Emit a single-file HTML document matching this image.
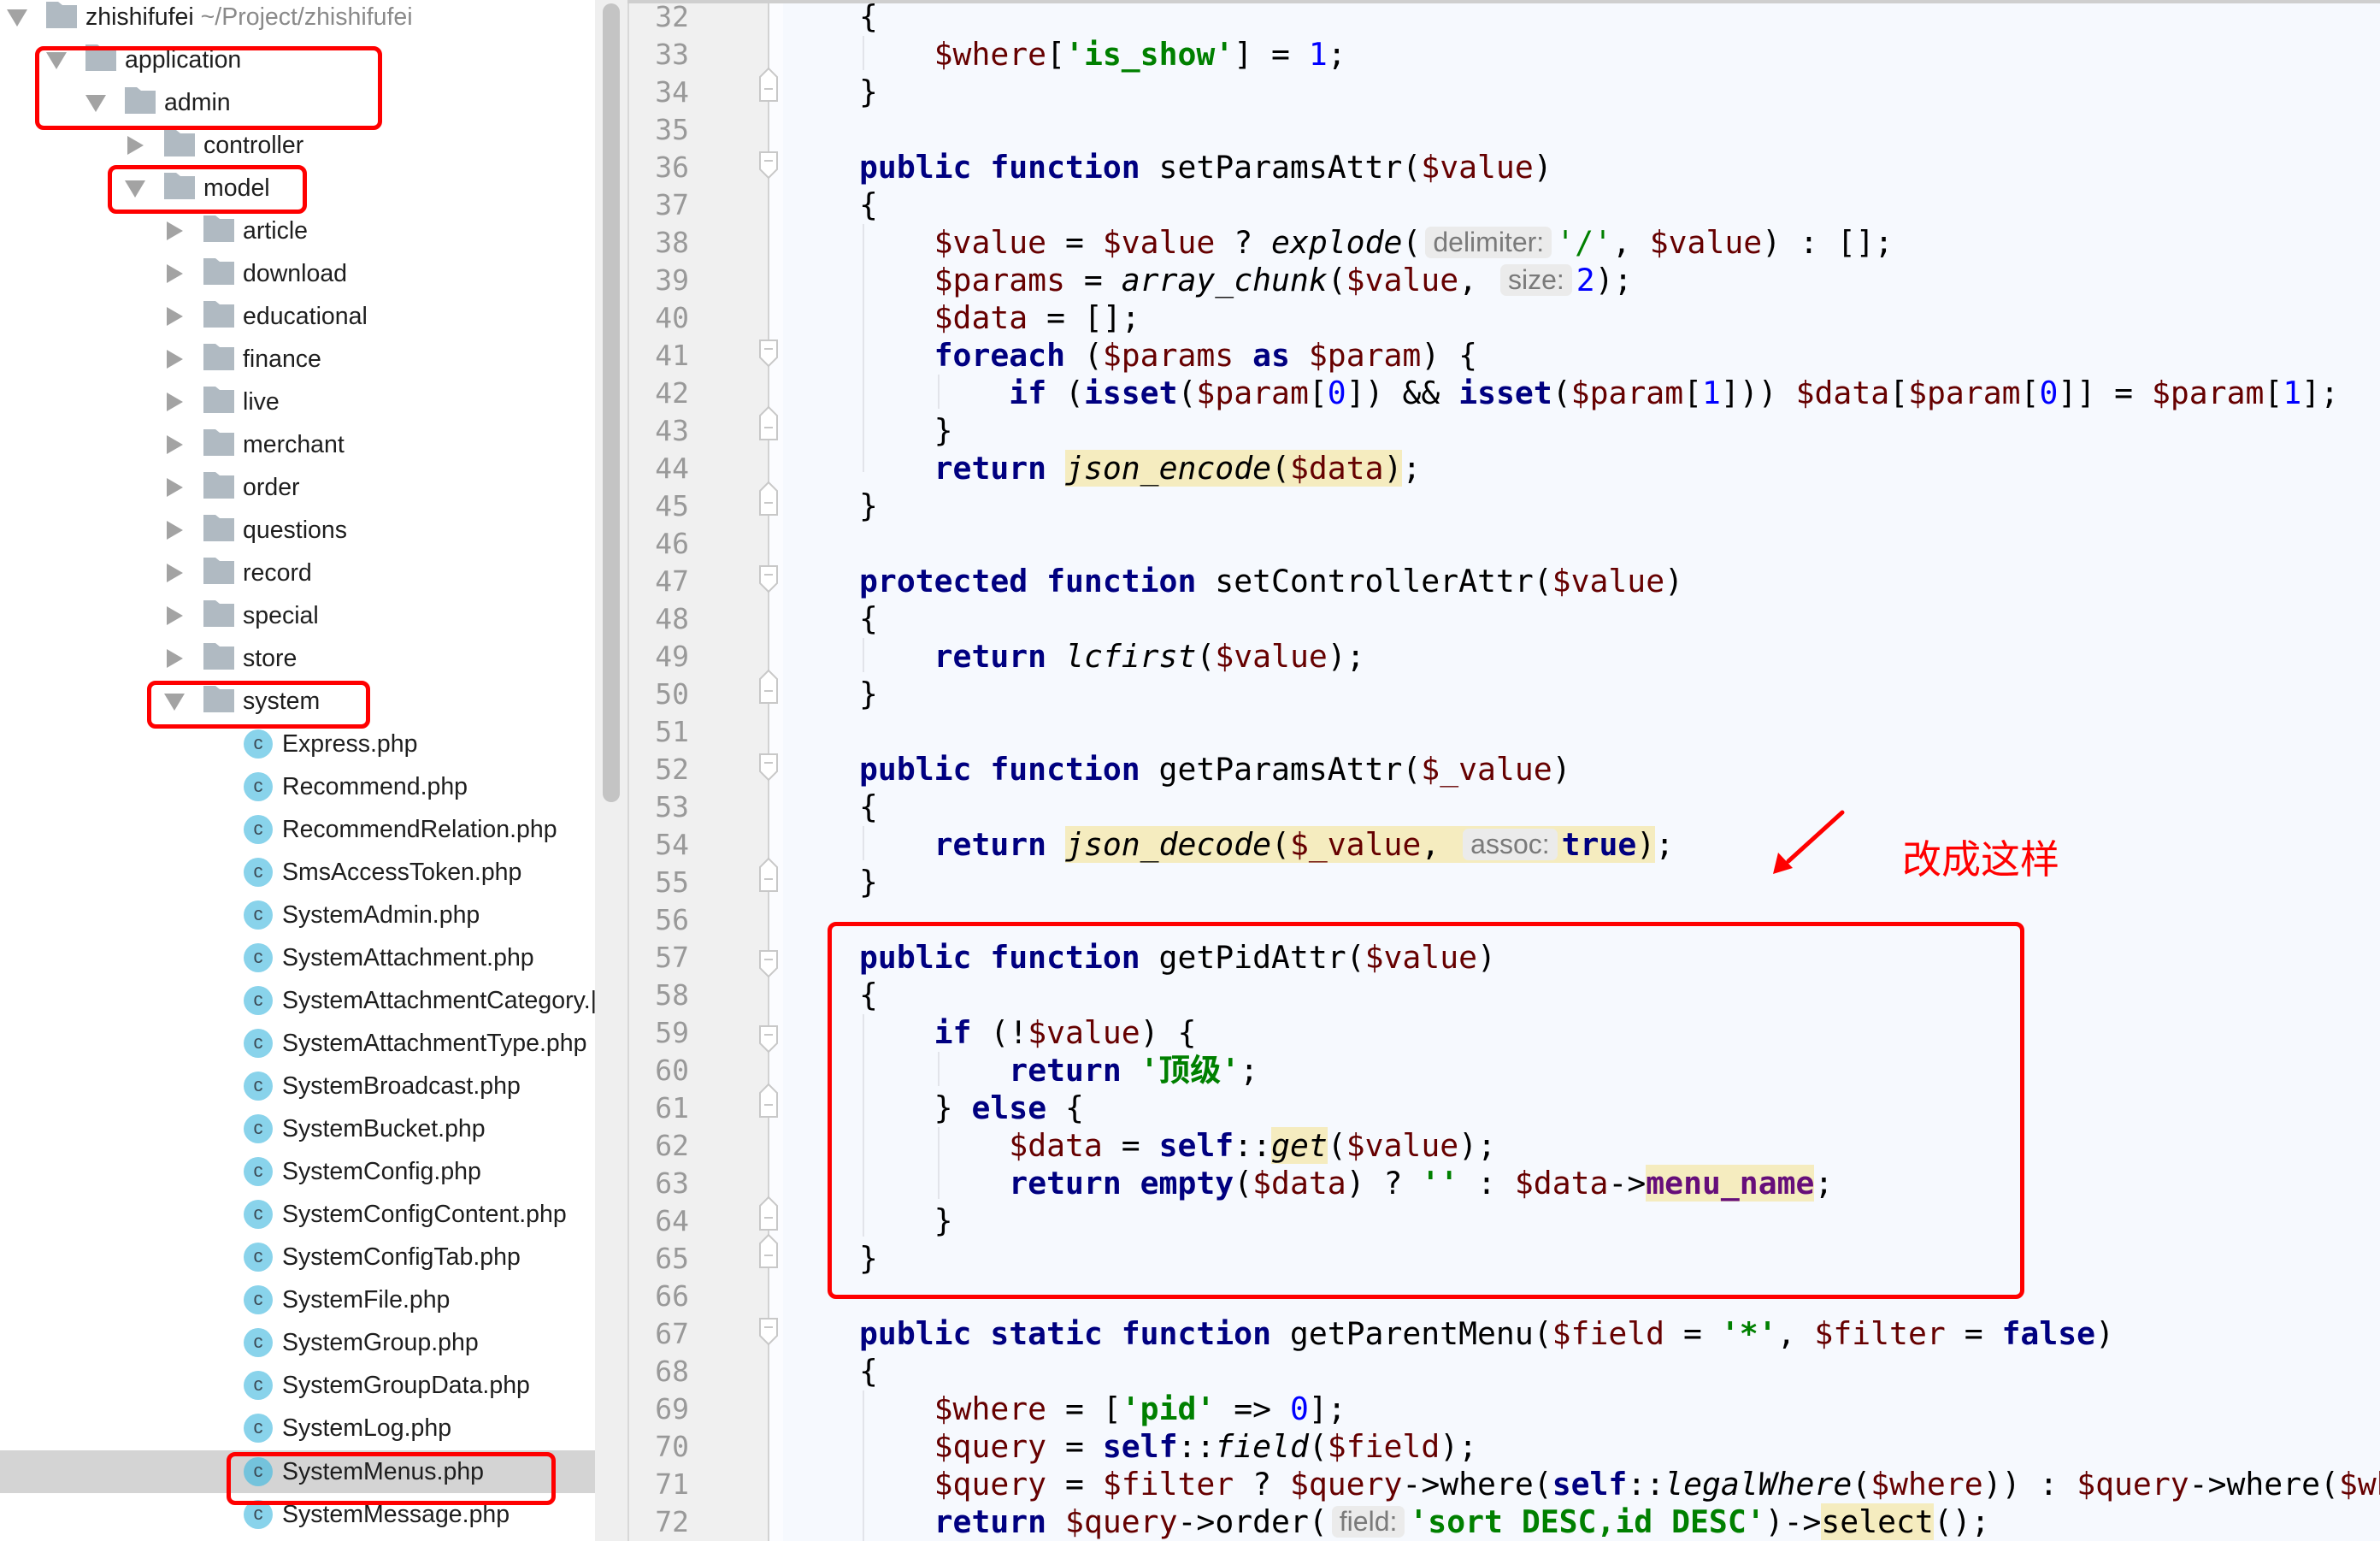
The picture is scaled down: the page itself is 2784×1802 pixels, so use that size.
<!DOCTYPE html>
<html><head><meta charset="utf-8"><style>
*{margin:0;padding:0;box-sizing:border-box}
body{width:2784px;height:1802px;overflow:hidden;background:#fff;position:relative;font-family:"Liberation Sans","Noto Sans CJK SC",sans-serif}
.row{position:absolute;left:0;width:696px;height:50px;font-size:28.5px;color:#1e1e1e;line-height:50px;white-space:nowrap}
.row .t{position:absolute;top:0}
.tri-d{position:absolute;top:16px;width:0;height:0;border-left:12px solid transparent;border-right:12px solid transparent;border-top:20px solid #a3a3a3}
.tri-r{position:absolute;top:14px;width:0;height:0;border-top:11px solid transparent;border-bottom:11px solid transparent;border-left:19px solid #a3a3a3}
.fold{position:absolute;top:11px;width:36px;height:27px;background:#b0bac2}
.fold:before{content:"";position:absolute;left:0;top:-4px;width:14px;height:5px;background:#b0bac2}
.fold:after{content:"";position:absolute;left:14px;top:-4px;width:0;height:0;border-bottom:4px solid #b0bac2;border-right:5px solid transparent}
.cls{position:absolute;top:8px;width:34px;height:34px;border-radius:50%;background:#89d3eb;color:#3b4a55;font-size:22px;line-height:32px;text-align:center;font-family:"Liberation Sans",sans-serif}
.red{position:absolute;border:5px solid #ff0000;border-radius:10px}
#track{position:absolute;left:696px;top:0;width:38px;height:1802px;background:#efefef}
#thumb{position:absolute;left:705px;top:4px;width:20px;height:934px;background:#c4c4c4;border-radius:10px}
#gut{position:absolute;left:734px;top:0;width:165px;height:1802px;background:#f0f0f0;border-left:2px solid #d8d8d8}
#gutline{position:absolute;left:898px;top:0;width:2px;height:1802px;background:#d2d2d2}
#strip{position:absolute;left:900px;top:0;width:16px;height:1802px;background:#fbfcff}
#code{position:absolute;left:916px;top:0;width:1868px;height:1802px;background:#f6f9fe}
#topline{position:absolute;left:734px;top:0;width:2050px;height:4px;background:#cfcfcf}
.ln{position:absolute;left:740px;width:66px;text-align:right;font-family:"DejaVu Sans Mono","Liberation Mono",monospace;font-size:33px;color:#999;height:44px;line-height:44px}
.cl{position:absolute;left:1005px;height:44px;line-height:44px;font-family:"DejaVu Sans Mono","Liberation Mono","Noto Sans CJK SC",monospace;font-size:36.4px;color:#000;white-space:pre}
.k{color:#000080;font-weight:bold}
.v{color:#660000}
.s{color:#008000;font-weight:bold}
.n{color:#0000ff}
.i{font-style:italic}
.f{color:#660e7a;font-weight:bold}
.h{background:#f5ecbf}
.p{display:inline-block;font-family:"Liberation Sans",sans-serif;font-size:32px;color:#7a7a7a;background:#ebebeb;border-radius:7px;padding:0 9px;line-height:37px;vertical-align:2px;font-style:normal;font-weight:normal;margin:0 5px}
</style></head><body>

<div class="row" style="top:-5px"><div class="tri-d" style="left:8px"></div><div class="fold" style="left:54px"></div><span class="t" style="left:100px">zhishifufei <span style="color:#8a8a8a">~/Project/zhishifufei</span></span></div>
<div class="row" style="top:45px"><div class="tri-d" style="left:54px"></div><div class="fold" style="left:100px"></div><span class="t" style="left:146px">application</span></div>
<div class="row" style="top:95px"><div class="tri-d" style="left:100px"></div><div class="fold" style="left:146px"></div><span class="t" style="left:192px">admin</span></div>
<div class="row" style="top:145px"><div class="tri-r" style="left:149px"></div><div class="fold" style="left:192px"></div><span class="t" style="left:238px">controller</span></div>
<div class="row" style="top:195px"><div class="tri-d" style="left:146px"></div><div class="fold" style="left:192px"></div><span class="t" style="left:238px">model</span></div>
<div class="row" style="top:245px"><div class="tri-r" style="left:195px"></div><div class="fold" style="left:238px"></div><span class="t" style="left:284px">article</span></div>
<div class="row" style="top:295px"><div class="tri-r" style="left:195px"></div><div class="fold" style="left:238px"></div><span class="t" style="left:284px">download</span></div>
<div class="row" style="top:345px"><div class="tri-r" style="left:195px"></div><div class="fold" style="left:238px"></div><span class="t" style="left:284px">educational</span></div>
<div class="row" style="top:395px"><div class="tri-r" style="left:195px"></div><div class="fold" style="left:238px"></div><span class="t" style="left:284px">finance</span></div>
<div class="row" style="top:445px"><div class="tri-r" style="left:195px"></div><div class="fold" style="left:238px"></div><span class="t" style="left:284px">live</span></div>
<div class="row" style="top:495px"><div class="tri-r" style="left:195px"></div><div class="fold" style="left:238px"></div><span class="t" style="left:284px">merchant</span></div>
<div class="row" style="top:545px"><div class="tri-r" style="left:195px"></div><div class="fold" style="left:238px"></div><span class="t" style="left:284px">order</span></div>
<div class="row" style="top:595px"><div class="tri-r" style="left:195px"></div><div class="fold" style="left:238px"></div><span class="t" style="left:284px">questions</span></div>
<div class="row" style="top:645px"><div class="tri-r" style="left:195px"></div><div class="fold" style="left:238px"></div><span class="t" style="left:284px">record</span></div>
<div class="row" style="top:695px"><div class="tri-r" style="left:195px"></div><div class="fold" style="left:238px"></div><span class="t" style="left:284px">special</span></div>
<div class="row" style="top:745px"><div class="tri-r" style="left:195px"></div><div class="fold" style="left:238px"></div><span class="t" style="left:284px">store</span></div>
<div class="row" style="top:795px"><div class="tri-d" style="left:192px"></div><div class="fold" style="left:238px"></div><span class="t" style="left:284px">system</span></div>
<div class="row" style="top:845px"><div class="cls" style="left:285px">c</div><span class="t" style="left:330px">Express.php</span></div>
<div class="row" style="top:895px"><div class="cls" style="left:285px">c</div><span class="t" style="left:330px">Recommend.php</span></div>
<div class="row" style="top:945px"><div class="cls" style="left:285px">c</div><span class="t" style="left:330px">RecommendRelation.php</span></div>
<div class="row" style="top:995px"><div class="cls" style="left:285px">c</div><span class="t" style="left:330px">SmsAccessToken.php</span></div>
<div class="row" style="top:1045px"><div class="cls" style="left:285px">c</div><span class="t" style="left:330px">SystemAdmin.php</span></div>
<div class="row" style="top:1095px"><div class="cls" style="left:285px">c</div><span class="t" style="left:330px">SystemAttachment.php</span></div>
<div class="row" style="top:1145px"><div class="cls" style="left:285px">c</div><span class="t" style="left:330px">SystemAttachmentCategory.|</span></div>
<div class="row" style="top:1195px"><div class="cls" style="left:285px">c</div><span class="t" style="left:330px">SystemAttachmentType.php</span></div>
<div class="row" style="top:1245px"><div class="cls" style="left:285px">c</div><span class="t" style="left:330px">SystemBroadcast.php</span></div>
<div class="row" style="top:1295px"><div class="cls" style="left:285px">c</div><span class="t" style="left:330px">SystemBucket.php</span></div>
<div class="row" style="top:1345px"><div class="cls" style="left:285px">c</div><span class="t" style="left:330px">SystemConfig.php</span></div>
<div class="row" style="top:1395px"><div class="cls" style="left:285px">c</div><span class="t" style="left:330px">SystemConfigContent.php</span></div>
<div class="row" style="top:1445px"><div class="cls" style="left:285px">c</div><span class="t" style="left:330px">SystemConfigTab.php</span></div>
<div class="row" style="top:1495px"><div class="cls" style="left:285px">c</div><span class="t" style="left:330px">SystemFile.php</span></div>
<div class="row" style="top:1545px"><div class="cls" style="left:285px">c</div><span class="t" style="left:330px">SystemGroup.php</span></div>
<div class="row" style="top:1595px"><div class="cls" style="left:285px">c</div><span class="t" style="left:330px">SystemGroupData.php</span></div>
<div class="row" style="top:1645px"><div class="cls" style="left:285px">c</div><span class="t" style="left:330px">SystemLog.php</span></div>
<div class="row" style="top:1696px;background:#d4d4d4"><div class="cls" style="left:285px;background:#74c3dc">c</div><span class="t" style="left:330px">SystemMenus.php</span></div>
<div class="row" style="top:1746px"><div class="cls" style="left:285px">c</div><span class="t" style="left:330px">SystemMessage.php</span></div>

<div class="red" style="left:41px;top:54px;width:406px;height:98px"></div>
<div class="red" style="left:126px;top:193px;width:233px;height:57px"></div>
<div class="red" style="left:172px;top:796px;width:261px;height:56px"></div>
<div class="red" style="left:265px;top:1698px;width:385px;height:62px"></div>

<div id="track"></div><div id="thumb"></div>
<div id="gut"></div><div id="gutline"></div><div id="strip"></div><div id="code"></div><div id="topline"></div>

<div class="ln" style="top:-2px">32</div><div class="ln" style="top:42px">33</div><div class="ln" style="top:86px">34</div><div class="ln" style="top:130px">35</div><div class="ln" style="top:174px">36</div><div class="ln" style="top:218px">37</div><div class="ln" style="top:262px">38</div><div class="ln" style="top:306px">39</div><div class="ln" style="top:350px">40</div><div class="ln" style="top:394px">41</div><div class="ln" style="top:438px">42</div><div class="ln" style="top:482px">43</div><div class="ln" style="top:526px">44</div><div class="ln" style="top:570px">45</div><div class="ln" style="top:614px">46</div><div class="ln" style="top:658px">47</div><div class="ln" style="top:702px">48</div><div class="ln" style="top:746px">49</div><div class="ln" style="top:790px">50</div><div class="ln" style="top:834px">51</div><div class="ln" style="top:878px">52</div><div class="ln" style="top:922px">53</div><div class="ln" style="top:966px">54</div><div class="ln" style="top:1010px">55</div><div class="ln" style="top:1054px">56</div><div class="ln" style="top:1098px">57</div><div class="ln" style="top:1142px">58</div><div class="ln" style="top:1186px">59</div><div class="ln" style="top:1230px">60</div><div class="ln" style="top:1274px">61</div><div class="ln" style="top:1318px">62</div><div class="ln" style="top:1362px">63</div><div class="ln" style="top:1406px">64</div><div class="ln" style="top:1450px">65</div><div class="ln" style="top:1494px">66</div><div class="ln" style="top:1538px">67</div><div class="ln" style="top:1582px">68</div><div class="ln" style="top:1626px">69</div><div class="ln" style="top:1670px">70</div><div class="ln" style="top:1714px">71</div><div class="ln" style="top:1758px">72</div>

<svg style="position:absolute;left:0;top:0" width="2784" height="1802">
<g fill="#fff" stroke="#c8c8c8" stroke-width="2">
<path d="M889 90 L899 80 L909 90 L909 118 L889 118 Z"/>
<path d="M889 178 L909 178 L909 198 L899 208 L889 198 Z"/>
<path d="M889 398 L909 398 L909 418 L899 428 L889 418 Z"/>
<path d="M889 486 L899 476 L909 486 L909 514 L889 514 Z"/>
<path d="M889 574 L899 564 L909 574 L909 602 L889 602 Z"/>
<path d="M889 662 L909 662 L909 682 L899 692 L889 682 Z"/>
<path d="M889 794 L899 784 L909 794 L909 822 L889 822 Z"/>
<path d="M889 882 L909 882 L909 902 L899 912 L889 902 Z"/>
<path d="M889 1014 L899 1004 L909 1014 L909 1042 L889 1042 Z"/>
<path d="M889 1112 L909 1112 L909 1132 L899 1142 L889 1132 Z"/>
<path d="M889 1200 L909 1200 L909 1220 L899 1230 L889 1220 Z"/>
<path d="M889 1278 L899 1268 L909 1278 L909 1306 L889 1306 Z"/>
<path d="M889 1410 L899 1400 L909 1410 L909 1438 L889 1438 Z"/>
<path d="M889 1454 L899 1444 L909 1454 L909 1482 L889 1482 Z"/>
<path d="M889 1542 L909 1542 L909 1562 L899 1572 L889 1562 Z"/>
</g>
<g stroke="#c8c8c8" stroke-width="2">
<path d="M894 104h10M894 188h10M894 408h10M894 500h10M894 588h10M894 672h10M894 808h10M894 892h10M894 1028h10M894 1122h10M894 1210h10M894 1292h10M894 1424h10M894 1468h10M894 1552h10"/>
</g>
<g fill="#e2e4ea">
<rect x="1009" y="42" width="2" height="40"/>
<rect x="1009" y="262" width="2" height="290"/>
<rect x="1097" y="438" width="2" height="40"/>
<rect x="1009" y="746" width="2" height="40"/>
<rect x="1009" y="966" width="2" height="40"/>
<rect x="1009" y="1186" width="2" height="260"/>
<rect x="1097" y="1230" width="2" height="40"/>
<rect x="1097" y="1318" width="2" height="84"/>
<rect x="1009" y="1626" width="2" height="176"/>
</g>
</svg>

<div class="cl" style="top:-2px">{</div>
<div class="cl" style="top:42px">    <span class="v">$where</span>[<span class="s">'is_show'</span>] = <span class="n">1</span>;</div>
<div class="cl" style="top:86px">}</div>
<div class="cl" style="top:174px"><span class="k">public function</span> setParamsAttr(<span class="v">$value</span>)</div>
<div class="cl" style="top:218px">{</div>
<div class="cl" style="top:262px">    <span class="v">$value</span> = <span class="v">$value</span> ? <span class="i">explode</span>(<span class="p">delimiter:</span><span class="s" style="font-weight:normal">'/'</span>, <span class="v">$value</span>) : [];</div>
<div class="cl" style="top:306px">    <span class="v">$params</span> = <span class="i">array_chunk</span>(<span class="v">$value</span>, <span class="p">size:</span><span class="n">2</span>);</div>
<div class="cl" style="top:350px">    <span class="v">$data</span> = [];</div>
<div class="cl" style="top:394px">    <span class="k">foreach</span> (<span class="v">$params</span> <span class="k">as</span> <span class="v">$param</span>) {</div>
<div class="cl" style="top:438px">        <span class="k">if</span> (<span class="k">isset</span>(<span class="v">$param</span>[<span class="n">0</span>]) &amp;&amp; <span class="k">isset</span>(<span class="v">$param</span>[<span class="n">1</span>])) <span class="v">$data</span>[<span class="v">$param</span>[<span class="n">0</span>]] = <span class="v">$param</span>[<span class="n">1</span>];</div>
<div class="cl" style="top:482px">    }</div>
<div class="cl" style="top:526px">    <span class="k">return</span> <span class="h"><span class="i">json_encode</span>(<span class="v">$data</span>)</span>;</div>
<div class="cl" style="top:570px">}</div>
<div class="cl" style="top:658px"><span class="k">protected function</span> setControllerAttr(<span class="v">$value</span>)</div>
<div class="cl" style="top:702px">{</div>
<div class="cl" style="top:746px">    <span class="k">return</span> <span class="i">lcfirst</span>(<span class="v">$value</span>);</div>
<div class="cl" style="top:790px">}</div>
<div class="cl" style="top:878px"><span class="k">public function</span> getParamsAttr(<span class="v">$_value</span>)</div>
<div class="cl" style="top:922px">{</div>
<div class="cl" style="top:966px">    <span class="k">return</span> <span class="h"><span class="i">json_decode</span>(<span class="v">$_value</span>, <span class="p">assoc:</span><span class="k">true</span>)</span>;</div>
<div class="cl" style="top:1010px">}</div>
<div class="cl" style="top:1098px"><span class="k">public function</span> getPidAttr(<span class="v">$value</span>)</div>
<div class="cl" style="top:1142px">{</div>
<div class="cl" style="top:1186px">    <span class="k">if</span> (!<span class="v">$value</span>) {</div>
<div class="cl" style="top:1230px">        <span class="k">return</span> <span class="s">'顶级'</span>;</div>
<div class="cl" style="top:1274px">    } <span class="k">else</span> {</div>
<div class="cl" style="top:1318px">        <span class="v">$data</span> = <span class="k">self</span>::<span class="h i">get</span>(<span class="v">$value</span>);</div>
<div class="cl" style="top:1362px">        <span class="k">return empty</span>(<span class="v">$data</span>) ? <span class="s">''</span> : <span class="v">$data</span>-&gt;<span class="f h">menu_name</span>;</div>
<div class="cl" style="top:1406px">    }</div>
<div class="cl" style="top:1450px">}</div>
<div class="cl" style="top:1538px"><span class="k">public static function</span> getParentMenu(<span class="v">$field</span> = <span class="s">'*'</span>, <span class="v">$filter</span> = <span class="k">false</span>)</div>
<div class="cl" style="top:1582px">{</div>
<div class="cl" style="top:1626px">    <span class="v">$where</span> = [<span class="s">'pid'</span> =&gt; <span class="n">0</span>];</div>
<div class="cl" style="top:1670px">    <span class="v">$query</span> = <span class="k">self</span>::<span class="i">field</span>(<span class="v">$field</span>);</div>
<div class="cl" style="top:1714px">    <span class="v">$query</span> = <span class="v">$filter</span> ? <span class="v">$query</span>-&gt;where(<span class="k">self</span>::<span class="i">legalWhere</span>(<span class="v">$where</span>)) : <span class="v">$query</span>-&gt;where(<span class="v">$where</span>);</div>
<div class="cl" style="top:1758px">    <span class="k">return</span> <span class="v">$query</span>-&gt;order(<span class="p">field:</span><span class="s">'sort DESC,id DESC'</span>)-&gt;<span class="h">select</span>();</div>

<div class="red" style="left:968px;top:1078px;width:1400px;height:441px"></div>
<svg style="position:absolute;left:0;top:0" width="2784" height="1802">
<line x1="2155" y1="950" x2="2092" y2="1007" stroke="#ff0000" stroke-width="5" stroke-linecap="round"/>
<path d="M2074 1022 L2080 997 L2097 1015 Z" fill="#ff0000"/>
</svg>
<div style="position:absolute;left:2225px;top:972px;font-size:46px;line-height:60px;color:#ff0000;font-family:'Noto Sans CJK SC',sans-serif">改成这样</div>
</body></html>
